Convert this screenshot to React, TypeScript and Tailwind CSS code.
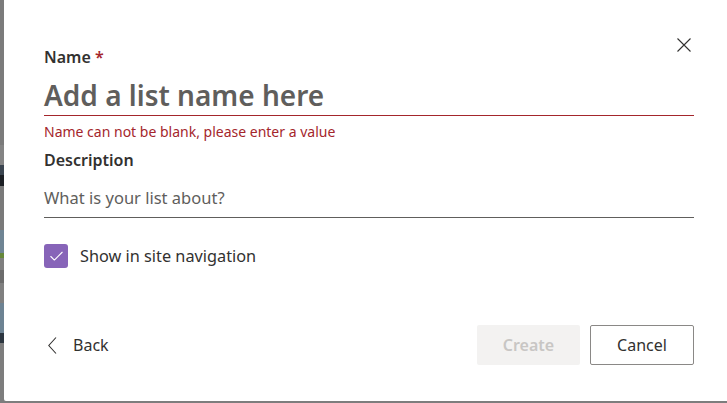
import { Check } from "lucide-react";

const font = { fontFamily: '"Segoe UI", "Noto Sans", sans-serif' };

function CloseIcon() {
  return (
    <svg width="14" height="14" viewBox="0 0 14 14" fill="none" stroke="#323130" strokeWidth="1.1">
      <path d="M0.5 0.5 L13.5 13.5 M13.5 0.5 L0.5 13.5" />
    </svg>
  );
}

function BackChevron() {
  return (
    <svg width="9" height="17" viewBox="0 0 9 17" fill="none" stroke="#323130" strokeWidth="1.1">
      <path d="M8 0.5 L0.8 8.5 L8 16.5" />
    </svg>
  );
}

export default function App() {
  return (
    <div
      className="flex h-[403px] w-[727px] bg-[#7d7d7d] pb-[2px]"
      style={font}
    >
      {/* blurred page behind the panel */}
      <div className="flex w-[4px] flex-col">
        <div className="h-[145px] bg-[#7b7b7b]" />
        <div className="h-[20px] bg-[#848484]" />
        <div className="h-[10px] bg-[#3b4550]" />
        <div className="h-[11px] bg-[#1c1f24]" />
        <div className="h-[44px] bg-[#7a7a7a]" />
        <div className="h-[23px] bg-[#6f8594]" />
        <div className="h-[5px] bg-[#66883a]" />
        <div className="h-[12px] bg-[#7f7f7f]" />
        <div className="h-[13px] bg-[#6c6c6c]" />
        <div className="h-[20px] bg-[#808080]" />
        <div className="h-[30px] bg-[#6d8393]" />
        <div className="h-[10px] bg-[#2c3640]" />
        <div className="flex-1 bg-[#7d7d7d]" />
      </div>

      <div className="relative flex flex-1 flex-col rounded-bl-[2px] bg-white pl-[40px] pr-[33px]">
        <button
          type="button"
          aria-label="Close"
          className="absolute right-[36px] top-[38px] flex"
        >
          <CloseIcon />
        </button>

        <label className="mt-[46px] block text-[16px] leading-[22px] font-semibold text-[#323130]">
          Name <span className="text-[#a4262c]">*</span>
        </label>
        <div className="mt-[7px] flex h-[41px] items-center border-b border-[#a4262c]">
          <span className="text-[28px] leading-[40px] font-semibold text-[#605e5c]">
            Add a list name here
          </span>
        </div>
        <p className="mt-[7px] text-[14px] leading-[18px] text-[#a4262c]">
          Name can not be blank, please enter a value
        </p>

        <label className="mt-[8px] block text-[16px] leading-[22px] font-semibold text-[#323130]">
          Description
        </label>
        <div className="mt-[16px] border-b border-[#605e5c] pb-[8px]">
          <span className="block text-[16.5px] leading-[22px] text-[#605e5c]">
            What is your list about?
          </span>
        </div>

        <div className="mt-[26px] flex items-center gap-[12px]">
          <span className="flex size-[24px] items-center justify-center rounded-[3px] bg-[#8764b8]">
            <Check size={17} color="#ffffff" strokeWidth={1.5} />
          </span>
          <span className="text-[16.3px] leading-[22px] text-[#323130]">
            Show in site navigation
          </span>
        </div>

        <div className="mt-[57px] flex items-center">
          <button type="button" className="ml-[4px] flex items-center gap-[16px] text-[16px] leading-[22px] text-[#323130]">
            <BackChevron />
            Back
          </button>
          <div className="ml-auto flex gap-[10px]">
            <button
              type="button"
              disabled
              className="h-[40px] w-[103px] rounded-[2px] bg-[#f3f2f1] text-[16px] font-semibold text-[#c8c6c4]"
            >
              Create
            </button>
            <button
              type="button"
              className="h-[40px] w-[104px] rounded-[2px] border border-[#8a8886] bg-white text-[16px] text-[#323130]"
            >
              Cancel
            </button>
          </div>
        </div>
      </div>
    </div>
  );
}
